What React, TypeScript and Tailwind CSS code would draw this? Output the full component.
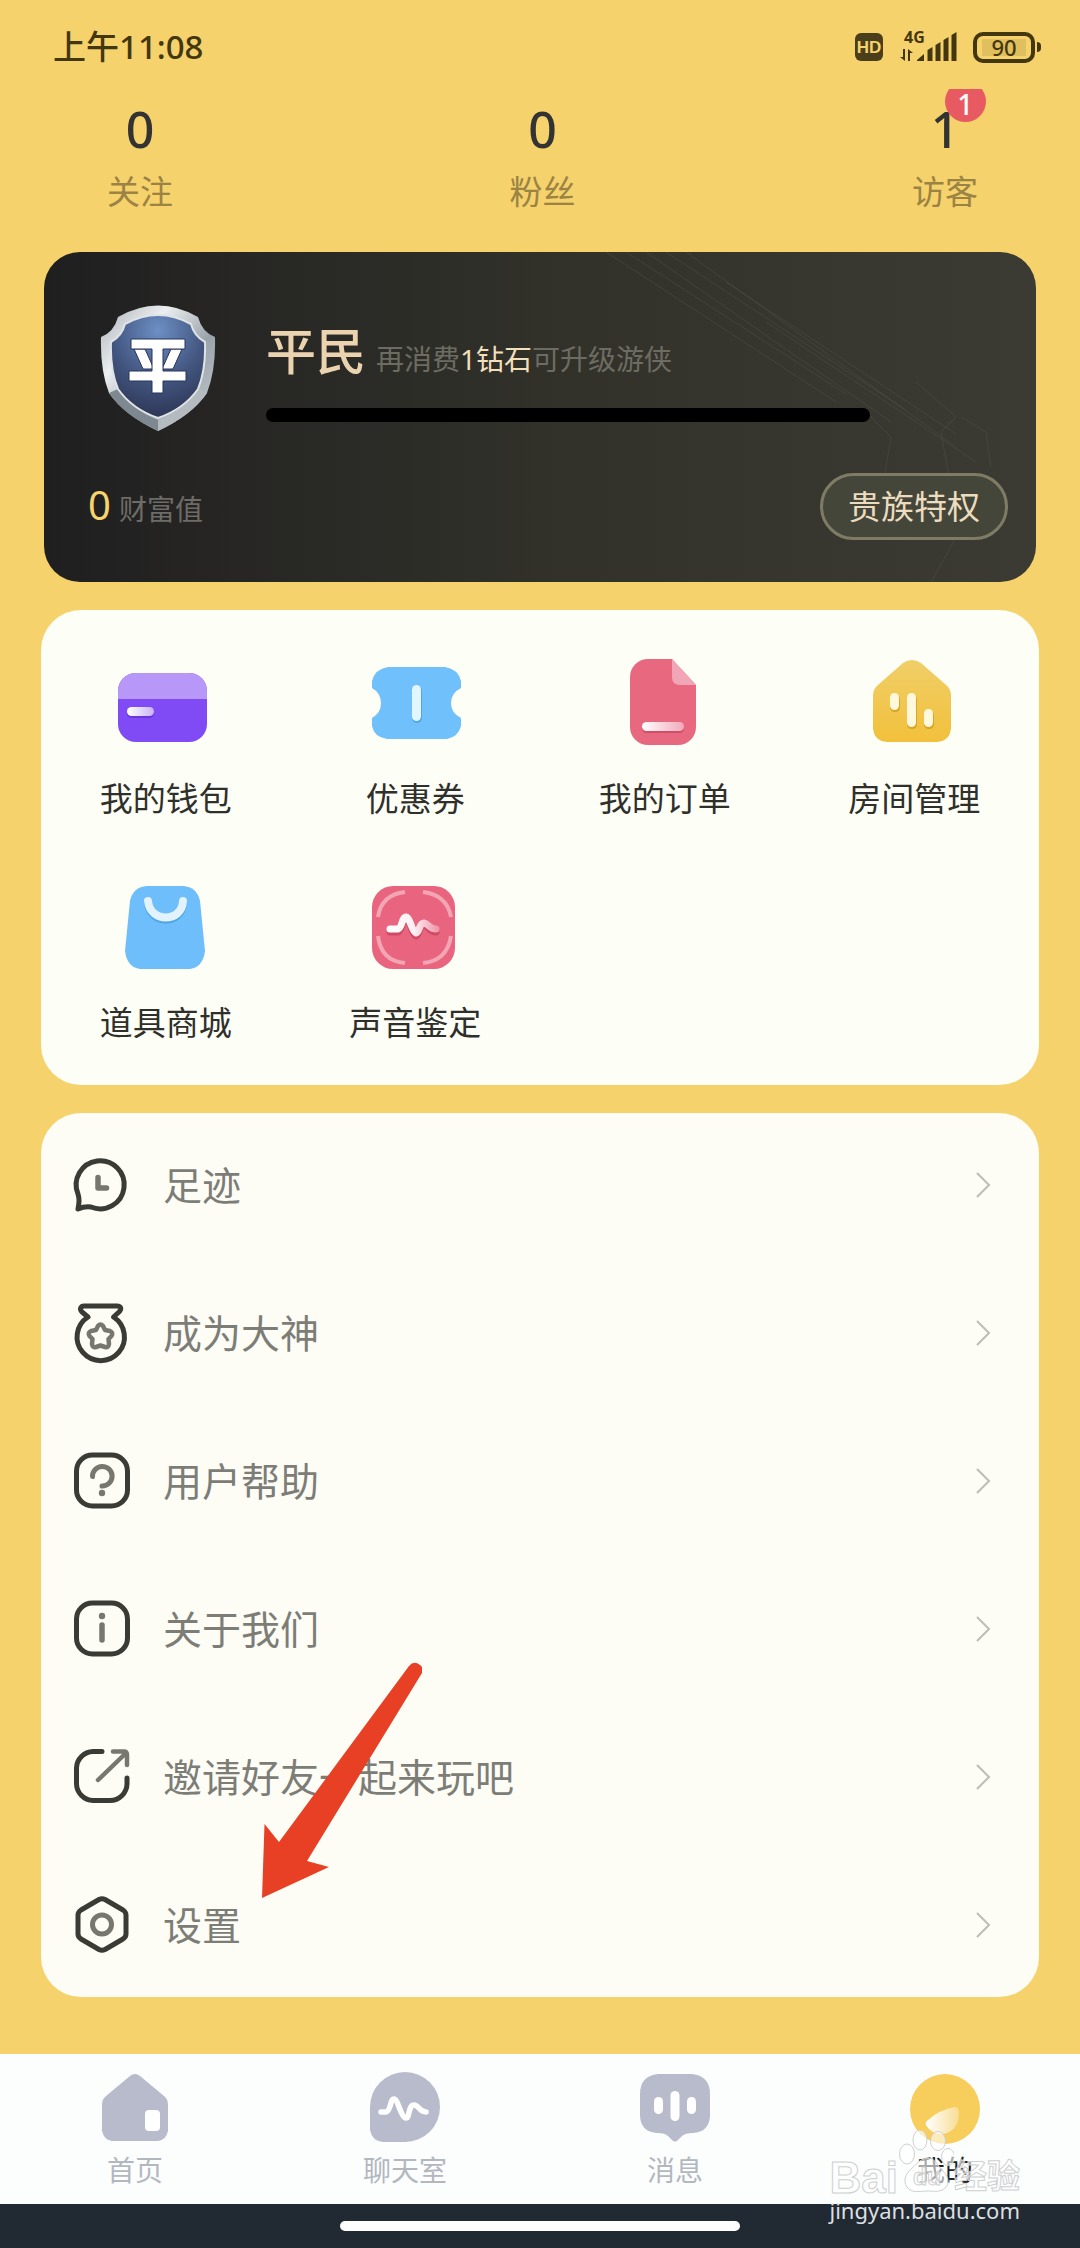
import type { ReactNode } from 'react'
import { clsx } from 'clsx'

const STATS = [
  { label: '关注', value: 0 },
  { label: '粉丝', value: 0 },
  { label: '访客', value: 1, badge: 1 },
]

const SHORTCUTS = [
  { label: '我的钱包', icon: <WalletIcon /> },
  { label: '优惠券', icon: <CouponIcon /> },
  { label: '我的订单', icon: <OrderIcon /> },
  { label: '房间管理', icon: <RoomIcon /> },
  { label: '道具商城', icon: <ShopIcon /> },
  { label: '声音鉴定', icon: <VoiceIcon /> },
]

const MENU = [
  { label: '足迹', icon: <FootprintIcon /> },
  { label: '成为大神', icon: <MedalIcon /> },
  { label: '用户帮助', icon: <HelpIcon /> },
  { label: '关于我们', icon: <AboutIcon /> },
  { label: '邀请好友一起来玩吧', icon: <InviteIcon /> },
  { label: '设置', icon: <SettingsIcon /> },
]

const TABS = [
  { label: '首页', icon: <HomeTabIcon /> },
  { label: '聊天室', icon: <ChatTabIcon /> },
  { label: '消息', icon: <MessageTabIcon /> },
  { label: '我的', icon: <MineTabIcon />, active: true },
]

export default function App() {
  return (
    <div className="flex min-h-screen flex-col bg-[#f5d26c] font-['Noto_Sans','Noto_Sans_CJK_SC',sans-serif] text-[#333]">
      <StatusBar />

      <main className="flex-1 overflow-hidden pb-14">
        <Stats />

        <div className="mt-10 flex flex-col gap-7 px-[41px]">
          <RankCard />
          <Shortcuts />
          <Menu />
        </div>
      </main>

      <TabBar />
    </div>
  )
}

function StatusBar() {
  return (
    <header className="flex h-[89px] items-center justify-between pt-[5px] pr-[39px] pl-[53px] text-[#43370f]">
      <time className="text-[33px] leading-10 font-medium">上午11:08</time>

      <div className="flex items-center gap-4">
        <span className="flex h-7 w-7 items-center justify-center rounded-md bg-[#4a3f1a] font-['Liberation_Sans',sans-serif] text-[17px] leading-none font-bold text-[#f5d26c]">
          HD
        </span>

        <svg
          viewBox="0 0 58 32"
          className="h-8 w-[58px] overflow-visible"
          fill="currentColor"
        >
          <text
            x="5"
            y="12"
            fontSize="16"
            fontWeight="700"
            fontFamily="Noto Sans, sans-serif"
          >
            4G
          </text>
          <path d="M4 18h2v12L1 26h3zM9 30V18l5 4h-3v8z" />
          <path d="M18 30v-1l7-6v7z" />
          <path d="M28.500 30V19l5-3v14zM36.500 30V14l5-3v19zM44.500 30V9l5-3v24zM52.500 30V4l5-3v29z" />
        </svg>

        <div className="flex items-center gap-0.5">
          <span className="flex h-[31px] w-[62px] items-center justify-center rounded-[10px] border-4 border-current">
            <span className="flex h-[17px] w-11 items-center justify-center bg-[#dfbf5e] text-[22px] leading-none font-medium">
              90
            </span>
          </span>
          <span className="h-2.5 w-1 rounded-r bg-current" />
        </div>
      </div>
    </header>
  )
}

function Stats() {
  return (
    <dl className="flex justify-between pt-2.5 pr-[102px] pl-[107px]">
      {STATS.map(({ label, value, badge }) => (
        <div key={label} className="flex flex-col-reverse items-center">
          <dt className="mt-[13px] text-[33px] leading-10 text-[#9b8344]">
            {label}
          </dt>
          <dd className="relative text-[50px] leading-[60px] font-medium">
            {value}
            {badge && (
              <span className="absolute -top-[18px] left-3.5 flex size-[41px] items-center justify-center rounded-full bg-[#e85a62] pt-1 text-[28px] leading-none text-white">
                {badge}
              </span>
            )}
          </dd>
        </div>
      ))}
    </dl>
  )
}

function RankCard() {
  return (
    <section className="relative mx-[3px] overflow-hidden rounded-[36px] bg-linear-to-r from-[#201f20] via-[#31312a] to-[#3c3b33] pt-[53px] pb-[42px]">
      <svg
        viewBox="0 0 460 330"
        className="absolute top-0 right-0 h-full"
        fill="none"
        stroke="#55554a"
        strokeOpacity=".45"
      >
        <path d="M30 0l230 150M50 0l220 142M70 0l245 170M90 0l240 158M110 0l270 195M150 30l230 152M190 70l210 140" />
        <path d="M290 160l25 25-10 60M340 130l40 35-15 15 10 55M385 165l25 15 5 35M400 250l-45 80" />
      </svg>

      <div className="relative flex items-center gap-[50px] pr-[166px] pl-14">
        <ShieldIcon />
        <div className="flex-1 pt-2">
          <h2 className="flex items-baseline gap-2.5 text-[50px] leading-[56px] font-medium text-[#ecd3b0]">
            平民
            <span className="text-[28px] leading-10 font-normal text-[#6d6c62]">
              再消费<span className="text-[#f3dfb9]">1钻石</span>可升级游侠
            </span>
          </h2>
          <div className="mt-[29px] h-3.5 rounded-full bg-black" />
        </div>
      </div>

      <div className="relative mt-[42px] flex items-center justify-between pr-7 pl-11">
        <p className="flex items-baseline gap-2 text-[28px] leading-10 text-[#6d6c66]">
          <span className="text-[40px] text-[#f6d56c]">0</span>
          财富值
        </p>
        <button
          type="button"
          className="h-[67px] rounded-full border-[3px] border-[#7f7c66] bg-[#45463a] px-[25px] text-[33px] leading-10 text-[#ecdcbf]"
        >
          贵族特权
        </button>
      </div>
    </section>
  )
}

function Shortcuts() {
  return (
    <section className="grid grid-cols-4 gap-y-[58px] rounded-[40px] bg-[#fdfef5] pt-[43px] pb-[42px]">
      {SHORTCUTS.map(({ label, icon }) => (
        <button
          key={label}
          type="button"
          className="flex flex-col items-center gap-[26px] text-[33px] leading-10 text-[#2f2f2b]"
        >
          {icon}
          {label}
        </button>
      ))}
    </section>
  )
}

function Menu() {
  return (
    <section className="relative rounded-[40px] bg-[#fdfdf5] py-[22px]">
      <ul className="flex flex-col gap-12">
        {MENU.map(({ label, icon }) => (
          <li key={label}>
            <button
              type="button"
              className="flex h-[100px] w-full items-center pr-[43px] pl-[29px] text-left text-[39px] leading-[52px] text-[#7d7d78]"
            >
              {icon}
              <span className="ml-[29px] flex-1">{label}</span>
              <svg
                viewBox="0 0 24 28"
                className="h-7 w-6"
                fill="none"
                stroke="#bdbdb6"
                strokeWidth="2"
              >
                <path d="M5 2l12 12L5 26" />
              </svg>
            </button>
          </li>
        ))}
      </ul>

      <svg
        viewBox="0 0 160 236"
        className="pointer-events-none absolute top-[549px] left-[221px] h-[236px] w-40"
        fill="#e84025"
      >
        <path d="M0 236L2.500 162 17 180 147 4Q152-2 158 3 162 6 160 11L45 199l22 6z" />
      </svg>
    </section>
  )
}

function TabBar() {
  return (
    <footer className="relative">
      <nav className="grid grid-cols-4 bg-[#fcfefe] pt-[18px] pb-4">
        {TABS.map(({ label, icon, active }) => (
          <button
            key={label}
            type="button"
            className={clsx(
              'flex flex-col items-center gap-2 text-[28px] leading-9',
              active ? 'text-[#22221f]' : 'text-[#b3b7bf]',
            )}
          >
            {icon}
            {label}
          </button>
        ))}
      </nav>

      <div className="flex h-11 items-center justify-center bg-[#212a32]">
        <span className="h-2.5 w-[37%] rounded-full bg-white" />
      </div>

      <Watermark />
    </footer>
  )
}

function Watermark() {
  return (
    <div className="pointer-events-none absolute right-[60px] bottom-[26px] flex flex-col items-end">
      <div className="flex items-end text-white/60 [-webkit-text-stroke:1px_#cfcfcf]">
        <span className="font-['Liberation_Sans',sans-serif] text-[44px] leading-10 font-bold">
          Bai
        </span>
        <svg
          viewBox="0 0 56 62"
          className="mb-1.5 h-[62px] w-14"
          fill="#fff"
          fillOpacity=".6"
          stroke="#cfcfcf"
        >
          <ellipse cx="9" cy="24" rx="7.500" ry="10" />
          <ellipse cx="22" cy="10" rx="7" ry="10" />
          <ellipse cx="40" cy="11" rx="7.500" ry="9.500" />
          <ellipse cx="50" cy="27" rx="6.500" ry="8.500" />
          <path d="M30 28c7 0 9 7 14 12 6 6 8 12 4 17-5 6-12 4-19 4s-15 3-20-4c-4-6-2-12 4-18 6-5 10-11 17-11z" />
          <text
            x="15"
            y="55"
            fontSize="23"
            fontWeight="700"
            fontFamily="Liberation Sans, sans-serif"
          >
            du
          </text>
        </svg>
        <span className="text-[33px] leading-[44px] font-bold">经验</span>
      </div>
      <span className="text-[22px] leading-6 text-[#dcdfe0]">
        jingyan.baidu.com
      </span>
    </div>
  )
}

function ShieldIcon() {
  return (
    <svg viewBox="0 0 116 126" className="h-[126px] w-[116px]">
      <defs>
        <linearGradient id="shield-rim" x1="0" y1="0" x2="1" y2="1">
          <stop offset="0" stopColor="#a9b0b6" />
          <stop offset=".3" stopColor="#eceef0" />
          <stop offset=".6" stopColor="#9aa3aa" />
          <stop offset="1" stopColor="#c8ced2" />
        </linearGradient>
        <radialGradient id="shield-face" cx=".5" cy=".15" r=".9">
          <stop offset="0" stopColor="#6c8fc4" />
          <stop offset=".55" stopColor="#42557f" />
          <stop offset="1" stopColor="#2b3250" />
        </radialGradient>
      </defs>
      <path
        d="M18 12Q58-11 98 12 102 27 115 32 116 65 107 88 92 110 58 126 24 110 9 88 0 65 1 32 14 27 18 12z"
        fill="url(#shield-rim)"
      />
      <path d="M58 115v11Q24 110 9 88l9-4q14 21 40 31z" fill="#7d8890" />
      <path d="M58 115v11Q92 110 107 88l-9-4q-14 21-40 31z" fill="#b3bbc0" />
      <path
        d="M25 19Q58 1 91 19 94 31 105 37 106 65 98 84 84 104 58 113 32 104 18 84 10 65 11 37 22 31 25 19z"
        fill="url(#shield-face)"
        stroke="#dfe3e6"
        strokeWidth="2"
      />
      <g fill="#fff" stroke="#26345c" strokeWidth="1">
        <path d="M34 44h11l9 20H43zM82 44H71l-9 20h11z" />
        <path d="M31 34h54v10H63v22h23v10H63v12H52V76H29V66h23V44H31z" />
      </g>
    </svg>
  )
}

function ShortcutIcon({ children }: { children: ReactNode }) {
  return (
    <svg viewBox="0 0 100 100" className="size-[100px]">
      {children}
    </svg>
  )
}

function WalletIcon() {
  return (
    <ShortcutIcon>
      <defs>
        <linearGradient id="wallet-slot">
          <stop offset="0" stopColor="#fff" />
          <stop offset="1" stopColor="#c9b2fb" />
        </linearGradient>
      </defs>
      <rect x="2" y="20" width="89" height="69" rx="18" fill="#804bf5" />
      <path d="M2 46V38A18 18 0 0 1 20 20h53a18 18 0 0 1 18 18v8z" fill="#b797f8" />
      <rect x="11" y="56" width="27" height="9" rx="4.500" fill="#6a35dd" />
      <rect x="11" y="54" width="27" height="9" rx="4.500" fill="url(#wallet-slot)" />
    </ShortcutIcon>
  )
}

function CouponIcon() {
  return (
    <ShortcutIcon>
      <path
        d="M23 14H80Q93 16 96 28V35Q86 40 86 50 86 60 96 65V73Q93 84 82 86H22Q9 84 7 73V65Q16 60 16 50 16 40 7 35V28Q10 16 23 14z"
        fill="#6fc0fb"
      />
      <rect x="47" y="33" width="10" height="37" rx="5" fill="#4fa6e6" />
      <rect x="47" y="32" width="9" height="36" rx="4.500" fill="#e3f5fe" />
    </ShortcutIcon>
  )
}

function OrderIcon() {
  return (
    <ShortcutIcon>
      <defs>
        <linearGradient id="order-line">
          <stop offset="0" stopColor="#fff" />
          <stop offset="1" stopColor="#f3a9bb" />
        </linearGradient>
      </defs>
      <path
        d="M33 6H57L81 32V74A18 18 0 0 1 63 92H33A18 18 0 0 1 15 74V24A18 18 0 0 1 33 6z"
        fill="#e8687f"
      />
      <path d="M57 6L81 32H65Q57 32 57 24z" fill="#f0a6b6" />
      <rect x="27" y="71" width="42" height="9" rx="4.500" fill="#cf4f68" />
      <rect x="27" y="69" width="42" height="9" rx="4.500" fill="url(#order-line)" />
    </ShortcutIcon>
  )
}

function RoomIcon() {
  return (
    <ShortcutIcon>
      <defs>
        <linearGradient id="room-wall" x1="0" y1="0" x2="0" y2="1">
          <stop offset="0" stopColor="#f0cf68" />
          <stop offset="1" stopColor="#f2c03b" />
        </linearGradient>
      </defs>
      <path
        d="M39 10Q48 4 57 10L81 31Q87 36 87 42V75Q86 88 73 89H23Q10 88 9 75V42Q9 36 15 31z"
        fill="url(#room-wall)"
      />
      <g fill="#d9a524">
        <rect x="26" y="42" width="10" height="17" rx="4.500" />
        <rect x="43" y="42" width="10" height="34" rx="4.500" />
        <rect x="60" y="58" width="10" height="18" rx="4.500" />
      </g>
      <g fill="#fff8dc">
        <rect x="26" y="40" width="9" height="17" rx="4.500" />
        <rect x="43" y="40" width="9" height="34" rx="4.500" />
        <rect x="60" y="56" width="9" height="18" rx="4.500" />
      </g>
    </ShortcutIcon>
  )
}

function ShopIcon() {
  return (
    <ShortcutIcon>
      <path
        d="M31 9H67Q81 10 84 24L89 74Q87 90 74 92H24Q11 90 9 74L14 24Q17 10 31 9z"
        fill="#6dbefa"
      />
      <g fill="none" strokeWidth="8" strokeLinecap="round">
        <path d="M32 26C34 48 66 48 67 26" stroke="#4da5e6" />
        <path d="M32 24C34 46 66 46 67 24" stroke="#e2f3fe" />
      </g>
    </ShortcutIcon>
  )
}

function VoiceIcon() {
  return (
    <ShortcutIcon>
      <defs>
        <linearGradient
          id="voice-wave"
          gradientUnits="userSpaceOnUse"
          x1="24"
          y1="0"
          x2="74"
          y2="0"
        >
          <stop offset="0" stopColor="#fff" />
          <stop offset=".5" stopColor="#fdeff2" />
          <stop offset="1" stopColor="#ef93a6" />
        </linearGradient>
      </defs>
      <rect x="7" y="9" width="83" height="83" rx="21" fill="#e9657f" />
      <path
        d="M13 40Q16 18 40 15M58 15Q82 18 86 40M13 59Q16 84 40 86M58 86Q82 84 86 59"
        fill="none"
        stroke="#f3a5b4"
        strokeWidth="4"
      />
      <g fill="none" strokeWidth="7" strokeLinecap="round" strokeLinejoin="round">
        <path
          d="M25 55H33C37 54 37 42 41 42 45 42 47 58 51 59 55 58 54 48 59 48 64 49 64 55 71 55"
          stroke="#cf4a65"
        />
        <path
          d="M25 52H33C37 51 37 40 41 40 45 40 47 55 51 56 55 55 54 46 59 46 64 47 64 52 71 52"
          stroke="url(#voice-wave)"
        />
      </g>
    </ShortcutIcon>
  )
}

function MenuIcon({ children }: { children: ReactNode }) {
  return (
    <svg
      viewBox="0 0 64 64"
      className="size-16"
      fill="none"
      stroke="#3b3b35"
      strokeWidth="5"
      strokeLinecap="round"
      strokeLinejoin="round"
    >
      {children}
    </svg>
  )
}

function FootprintIcon() {
  return (
    <MenuIcon>
      <path d="M21 54A24 24 0 1 0 8 41Q10 47 8 56 15 53 21 54z" />
      <path d="M28 24.500V35H36.500" stroke="#77776f" strokeWidth="5.500" />
    </MenuIcon>
  )
}

function MedalIcon() {
  return (
    <MenuIcon>
      <path d="M18 16L12 11C9 8 11 5 14 5H47C51 5 52 8 49 11L43.500 16A23.700 23.700 0 1 1 18 16z" />
      <path
        d="M28 25Q30.500 22 33 25L35 29 40 30Q43.500 31.500 41.500 35L38.500 38 39 43Q38.500 47 35 46L30.500 44.500 26 46Q22.500 47 22 43L22.500 38 19.500 35Q17.500 31.500 21 30L26 29z"
        stroke="#77776f"
        strokeWidth="4.500"
      />
    </MenuIcon>
  )
}

function HelpIcon() {
  return (
    <MenuIcon>
      <rect x="6.500" y="6" width="51" height="51" rx="16" />
      <path d="M22.500 27.500A9.800 9.800 0 1 1 32 37" stroke="#77776f" />
      <circle cx="32" cy="44" r="3.200" fill="#77776f" stroke="none" />
    </MenuIcon>
  )
}

function AboutIcon() {
  return (
    <MenuIcon>
      <rect x="6.500" y="6" width="51" height="51" rx="16" />
      <circle cx="32" cy="19" r="3.200" fill="#77776f" stroke="none" />
      <path d="M32 28V43" stroke="#77776f" strokeWidth="5.500" />
    </MenuIcon>
  )
}

function InviteIcon() {
  return (
    <MenuIcon>
      <path d="M32 6.500H23A17 17 0 0 0 6.500 23V39A17 17 0 0 0 23 55.500H40A17 17 0 0 0 57 39V33" />
      <path d="M43 6.500H54Q57 6.500 57 10V20M55 9L28 35" stroke="#77776f" strokeWidth="4.500" />
    </MenuIcon>
  )
}

function SettingsIcon() {
  return (
    <MenuIcon>
      <path d="M29 6.500Q32 5 35 6.500L53 17Q56 19 56 22V41Q56 44 53 46L35 56.500Q32 58 29 56.500L11 46Q8 44 8 41V22Q8 19 11 17z" />
      <circle cx="32" cy="31.500" r="9.500" stroke="#77776f" />
    </MenuIcon>
  )
}

function TabIcon({ children }: { children: ReactNode }) {
  return (
    <svg viewBox="0 0 72 72" className="size-[72px]" fill="#b7bbcb">
      {children}
    </svg>
  )
}

function HomeTabIcon() {
  return (
    <TabIcon>
      <path d="M31 4Q36 0 41 4L65 24Q69 27 69 33V59Q67 68 59 69H13Q5 68 3 59V33Q3 27 7 24z" />
      <rect x="46" y="38" width="15" height="21" rx="4" fill="#fff" />
    </TabIcon>
  )
}

function ChatTabIcon() {
  return (
    <TabIcon>
      <path d="M36 0A35 35 0 0 1 36 70H14Q3 69 1 58V35A35 35 0 0 1 36 0z" />
      <path
        d="M12 40H17C22 39 21 27 25 27 29 27 32 46 37 46 41 46 39 33 45 33 50 33 50 40 57 40"
        fill="none"
        stroke="#fff"
        strokeWidth="5.500"
        strokeLinecap="round"
      />
    </TabIcon>
  )
}

function MessageTabIcon() {
  return (
    <TabIcon>
      <path d="M19 2H53Q71 4 71 22V44Q70 60 54 61 46 61 43 64L39 68Q36 71 33 68L29 64Q26 61 18 61 2 60 1 44V22Q1 4 19 2z" />
      <g fill="#fff">
        <rect x="15" y="25" width="9" height="17" rx="4.500" />
        <rect x="31.500" y="19" width="9" height="30" rx="4.500" />
        <rect x="48" y="25" width="9" height="17" rx="4.500" />
      </g>
    </TabIcon>
  )
}

function MineTabIcon() {
  return (
    <TabIcon>
      <defs>
        <linearGradient id="mine-smile">
          <stop offset="0" stopColor="#fff" />
          <stop offset="1" stopColor="#f8dd95" />
        </linearGradient>
      </defs>
      <circle cx="36" cy="37" r="35" fill="#f7cd5c" />
      <path
        d="M18 49Q16 50 17 53 22 62 33 62 49 60 50 42 50 35 46 35 31 37 18 49z"
        fill="url(#mine-smile)"
      />
    </TabIcon>
  )
}
